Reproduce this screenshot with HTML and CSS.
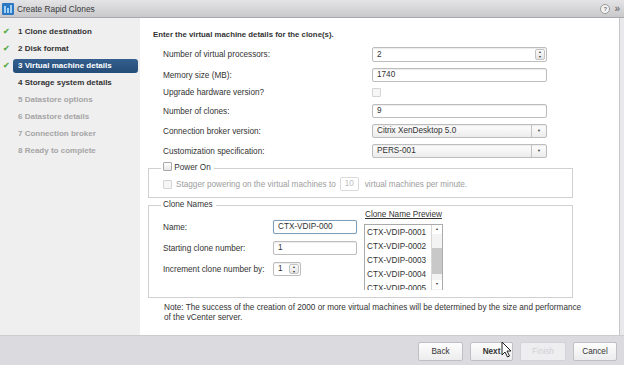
FILE: index.html
```html
<!DOCTYPE html>
<html lang="en">
<head>
  <meta charset="UTF-8">
  <title>Create Rapid Clones</title>
  <link rel="stylesheet" href="styles.css">
</head>
<body>
  <div class="janela">
    <div class="titulo">
      <svg class="logo" width="12" height="12" viewBox="0 0 12 12">
        <rect width="12" height="12" rx="1" fill="#2c78c2"/>
        <rect x="2" y="3" width="2" height="7" fill="#9fd0f5"/>
        <rect x="5" y="5" width="2" height="5" fill="#9fd0f5"/>
        <rect x="8" y="2" width="2" height="8" fill="#9fd0f5"/>
      </svg>
      <span class="titulo-texto">Create Rapid Clones</span>
      <span class="titulo-icones">
        <span class="ajuda">?</span>
        <span class="mais">&raquo;</span>
      </span>
    </div>

    <div class="corpo">
      <ul class="passos">
        <li class="feito"><span class="check">&#10004;</span><span class="rotulo">1 Clone destination</span></li>
        <li class="feito"><span class="check">&#10004;</span><span class="rotulo">2 Disk format</span></li>
        <li class="feito atual"><span class="check">&#10004;</span><span class="rotulo">3 Virtual machine details</span></li>
        <li><span class="check"></span><span class="rotulo">4 Storage system details</span></li>
        <li class="inativo"><span class="check"></span><span class="rotulo">5 Datastore options</span></li>
        <li class="inativo"><span class="check"></span><span class="rotulo">6 Datastore details</span></li>
        <li class="inativo"><span class="check"></span><span class="rotulo">7 Connection broker</span></li>
        <li class="inativo"><span class="check"></span><span class="rotulo">8 Ready to complete</span></li>
      </ul>

      <div class="conteudo">
        <h1>Enter the virtual machine details for the clone(s).</h1>

        <div class="formulario">
          <label>Number of virtual processors:</label>
          <div class="campo spin">2<span class="setas"><i>&#9650;</i><i>&#9660;</i></span></div>

          <label>Memory size (MB):</label>
          <div class="campo">1740</div>

          <label class="curto">Upgrade hardware version?</label>
          <div class="curto"><span class="caixa desligada"></span></div>

          <label>Number of clones:</label>
          <div class="campo">9</div>

          <label>Connection broker version:</label>
          <div class="campo lista-sel">Citrix XenDesktop 5.0<span class="seta">&#9660;</span></div>

          <label>Customization specification:</label>
          <div class="campo lista-sel">PERS-001<span class="seta">&#9660;</span></div>
        </div>

        <fieldset class="grupo ligar">
          <legend><span class="caixa"></span> Power On</legend>
          <div class="linha-stagger">
            <span class="caixa desligada"></span>
            <span>Stagger powering on the virtual machines to</span>
            <span class="campo mini">10</span>
            <span>virtual machines per minute.</span>
          </div>
        </fieldset>

        <fieldset class="grupo nomes">
          <legend>Clone Names</legend>
          <div class="colunas">
            <div class="coluna-esq">
              <div class="linha"><label>Name:</label><div class="campo foco">CTX-VDIP-000</div></div>
              <div class="linha"><label>Starting clone number:</label><div class="campo">1</div></div>
              <div class="linha"><label>Increment clone number by:</label><div class="campo spin pequeno">1<span class="setas"><i>&#9650;</i><i>&#9660;</i></span></div></div>
            </div>
            <div class="coluna-dir">
              <div class="previa-titulo">Clone Name Preview</div>
              <div class="previa">
                <ul>
                  <li>CTX-VDIP-0001</li>
                  <li>CTX-VDIP-0002</li>
                  <li>CTX-VDIP-0003</li>
                  <li>CTX-VDIP-0004</li>
                  <li>CTX-VDIP-0005</li>
                </ul>
                <div class="barra">
                  <span class="b-seta">&#9650;</span>
                  <span class="b-polegar"></span>
                  <span class="b-seta">&#9660;</span>
                </div>
              </div>
            </div>
          </div>
        </fieldset>

        <p class="nota">Note: The success of the creation of 2000 or more virtual machines will be determined by the size and performance<br>of the vCenter server.</p>
      </div>
    </div>

    <div class="rodape">
      <button class="b-back">Back</button>
      <button class="b-next">Next</button>
      <button class="b-finish" disabled>Finish</button>
      <button class="b-cancel">Cancel</button>
      <svg class="cursor" width="11" height="17" viewBox="0 0 11 17">
        <path d="M1 1 L1 14 L4 11 L6.5 16 L8.5 15 L6 10 L10 10 Z" fill="#fff" stroke="#222" stroke-width="1"/>
      </svg>
    </div>
  </div>
</body>
</html>
```

FILE: styles.css
```css
body {
  margin: 0;
  font-family: 'Liberation Sans', Arial, sans-serif;
  font-size: 8.2px;
  color: #333;
  background: #e9e9ec;
}

.janela {
  width: 624px;
  height: 365px;
  display: flex;
  flex-direction: column;
  overflow: hidden;
}

/* barra de titulo */
.titulo {
  height: 17px;
  display: flex;
  align-items: center;
  padding: 0 4px 0 2px;
  background: linear-gradient(#e4e4e6, #c9c9cc);
  border-bottom: 1px solid #a9a9ad;
}

.logo {
  margin-right: 3px;
}

.titulo-texto {
  font-size: 8.4px;
  color: #3a3a3a;
}

.titulo-icones {
  margin-left: auto;
  display: flex;
  align-items: center;
  gap: 4px;
  color: #777;
}

.ajuda {
  width: 8px;
  height: 8px;
  border: 1px solid #999;
  border-radius: 50%;
  font-size: 6px;
  line-height: 8px;
  text-align: center;
  background: #f4f4f4;
  font-weight: bold;
}

.mais {
  font-size: 10px;
  font-weight: bold;
  line-height: 8px;
}

.corpo {
  height: 317px;
  display: flex;
}

/* passos do assistente */
.passos {
  list-style: none;
  margin: 0;
  padding: 5px 0 0 0;
  width: 140px;
  background: #efeff0;
}

.passos li {
  height: 17px;
  display: flex;
  align-items: center;
  font-weight: bold;
  font-size: 8px;
}

.check {
  width: 13px;
  padding-left: 3px;
  box-sizing: border-box;
  color: #5aae4a;
  font-size: 8px;
}

.rotulo {
  height: 14px;
  line-height: 14px;
  width: 125px;
  padding-left: 5px;
  box-sizing: border-box;
  border-radius: 3px;
}

.atual .rotulo {
  background: linear-gradient(#345f8e, #244c78);
  color: white;
}

.inativo {
  color: #a5a5a5;
}

/* area principal */
.conteudo {
  flex: 1;
  background: white;
  border-right: 1px solid #c6c6c8;
  margin-right: 4px;
  padding: 12px 0 0 13px;
}

h1 {
  font-size: 7.8px;
  line-height: 10px;
  margin: 0 0 7px 0;
}

.formulario {
  margin-left: 10px;
  display: grid;
  grid-template-columns: 209px 175px;
  grid-template-rows: 15px 14px 10px 14px 14px 14px;
  row-gap: 6px;
  align-items: center;
}

.campo {
  position: relative;
  height: 14px;
  line-height: 12px;
  box-sizing: border-box;
  border: 1px solid #bdbdbd;
  border-radius: 2px;
  padding-left: 4px;
  background: white;
  box-shadow: inset 0 1px 1px #ececec;
}

.formulario .spin {
  height: 15px;
  line-height: 13px;
}

.setas {
  position: absolute;
  right: 1px;
  top: 1px;
  bottom: 1px;
  width: 10px;
  display: flex;
  flex-direction: column;
  border: 1px solid #c3c3c3;
  border-radius: 2px;
  background: linear-gradient(#fbfbfb, #e4e4e4);
  box-sizing: border-box;
}

.setas i {
  flex: 1;
  font-style: normal;
  font-size: 3.5px;
  line-height: 5px;
  text-align: center;
  color: #444;
}

.lista-sel {
  background: linear-gradient(#fdfdfd, #ececec);
}

.seta {
  position: absolute;
  right: 0;
  top: 0;
  bottom: 0;
  width: 14px;
  border-left: 1px solid #c3c3c3;
  font-size: 4px;
  line-height: 12px;
  text-align: center;
  color: #444;
}

.caixa {
  display: inline-block;
  width: 9px;
  height: 9px;
  box-sizing: border-box;
  border: 1px solid #a9a9a9;
  border-radius: 1px;
  background: linear-gradient(#fff, #e8e8e8);
  vertical-align: middle;
}

.caixa.desligada {
  border-color: #d4d4d4;
  background: #f6f6f6;
}

.curto {
  height: 10px;
  line-height: 10px;
}

/* grupos */
.grupo {
  margin: 0 0 0 -5px;
  width: 425px;
  box-sizing: border-box;
  border: 1px solid #d0d0d0;
  padding: 0 0 0 14px;
}

.grupo legend {
  padding: 0 3px 0 2px;
  line-height: 10px;
  height: 10px;
  margin-left: -2px;
}

.ligar {
  margin-top: 5px;
  padding-top: 4px;
  padding-bottom: 6px;
}

.ligar legend .caixa {
  margin-top: -2px;
}

.linha-stagger {
  display: flex;
  align-items: center;
  height: 14px;
  color: #9d9d9d;
  gap: 4px;
}

.campo.mini {
  width: 19px;
  color: #c0c0c0;
  border-color: #dadada;
  box-shadow: none;
  text-align: center;
  padding-left: 0;
  margin: 0 2px 0 0;
}

.nomes {
  margin-top: 2px;
  padding-bottom: 7px;
}

.colunas {
  display: flex;
  gap: 7px;
}

.coluna-esq {
  padding-top: 10px;
  display: flex;
  flex-direction: column;
  gap: 7px;
}

.linha {
  display: flex;
  align-items: center;
}

.linha label {
  width: 110px;
}

.linha .campo {
  width: 84px;
}

.campo.foco {
  border-color: #7e9fb9;
  box-shadow: 0 0 1px #a8c3d8;
}

.linha .campo.pequeno {
  width: 28px;
  height: 14px;
  line-height: 12px;
}

.previa-titulo {
  text-decoration: underline;
  line-height: 10px;
  margin: 0 0 4px 1px;
}

.previa {
  width: 79px;
  height: 66px;
  box-sizing: border-box;
  border: 1px solid #aaa;
  border-bottom: none;
  display: flex;
  overflow: hidden;
}

.previa ul {
  list-style: none;
  margin: 0;
  padding: 1px 0 0 2px;
  flex: 1;
}

.previa li {
  height: 14px;
  line-height: 14px;
}

.barra {
  width: 10px;
  border-left: 1px solid #d6d6d6;
  display: flex;
  flex-direction: column;
  background: #f3f3f3;
}

.b-seta {
  height: 9px;
  font-size: 3.5px;
  line-height: 9px;
  text-align: center;
  color: #333;
  background: white;
}

.b-polegar {
  margin: 14px 0 6px 0;
  height: 26px;
  background: #c8c8c8;
}

.nota {
  margin: 5px 0 0 11px;
  line-height: 10px;
}

/* rodape */
.rodape {
  position: relative;
  flex: 1;
  background: #dadadf;
  border-top: 1px solid #cbcbd0;
  display: flex;
  justify-content: flex-end;
  align-items: flex-start;
  padding: 6px 7px 0 0;
  gap: 7px;
}

button {
  height: 19px;
  font-family: 'Liberation Sans', Arial, sans-serif;
  font-size: 8.2px;
  color: #333;
  background: linear-gradient(#fdfdfd, #ececee);
  border: 1px solid #c0c0c4;
  border-radius: 2px;
  padding: 0;
}

.b-back { width: 45px; }
.b-next { width: 43px; font-weight: bold; }
.b-finish { width: 46px; color: #cfcfd2; background: #eeeef0; border-color: #d4d4d8; }
.b-cancel { width: 44px; }

.cursor {
  position: absolute;
  left: 501px;
  top: 5px;
}
```
